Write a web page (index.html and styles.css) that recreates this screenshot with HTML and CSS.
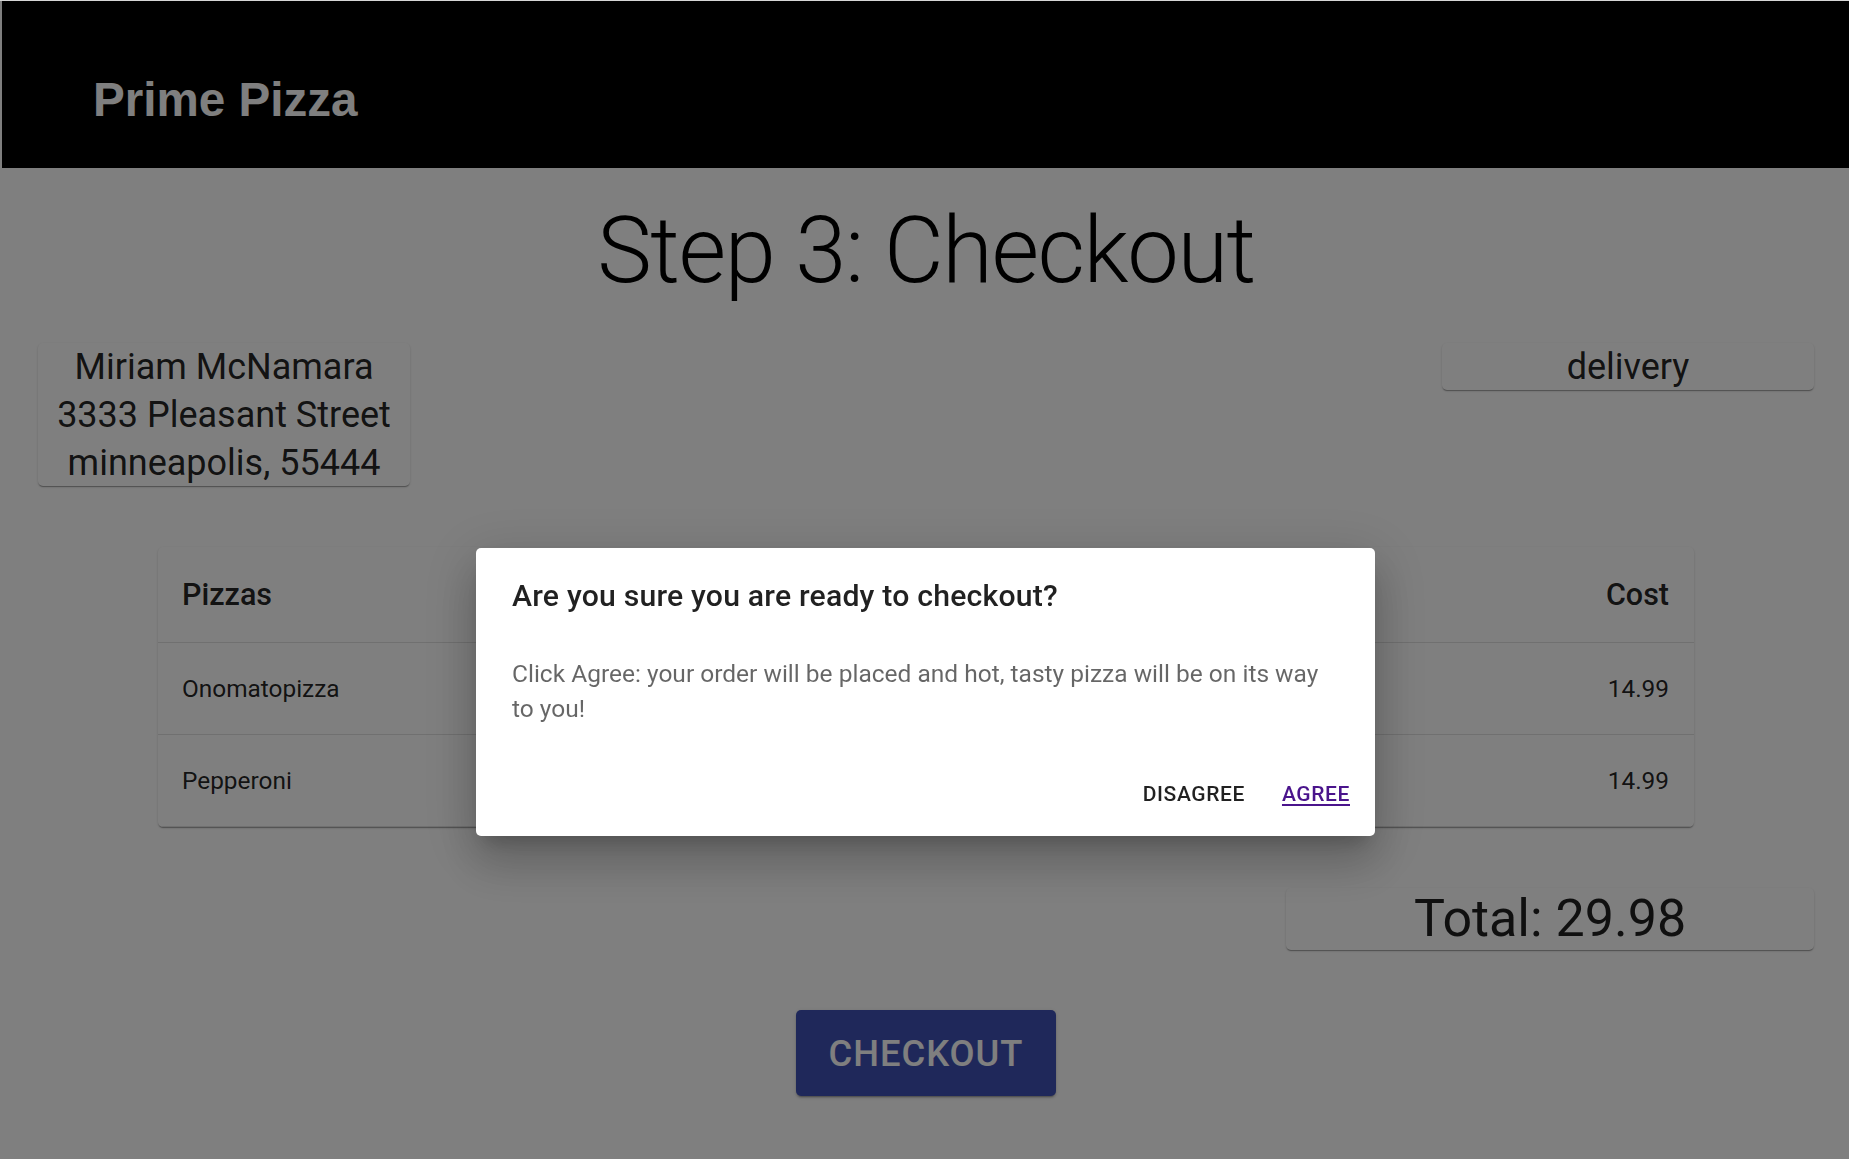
FILE: index.html
```html
<!DOCTYPE html>
<html lang="en">
<head>
<meta charset="utf-8">
<title>Prime Pizza - Checkout</title>
<link rel="stylesheet" href="styles.css">
</head>
<body>
<div class="topline"></div>
<header class="appbar">
  <h1 class="brand">Prime Pizza</h1>
</header>
<main class="page">
  <h2 class="step-title">Step 3: Checkout</h2>
  <div class="info-row">
    <div class="paper info-card">
      <div class="info-text">Miriam McNamara<br>3333 Pleasant Street<br>minneapolis, 55444</div>
    </div>
    <div class="paper info-card">
      <div class="info-text">delivery</div>
    </div>
  </div>
  <div class="paper table-wrap">
    <table class="order-table">
      <thead>
        <tr><th class="col-name">Pizzas</th><th class="col-cost">Cost</th></tr>
      </thead>
      <tbody>
        <tr><td class="col-name">Onomatopizza</td><td class="col-cost">14.99</td></tr>
        <tr><td class="col-name">Pepperoni</td><td class="col-cost">14.99</td></tr>
      </tbody>
    </table>
  </div>
  <div class="total-row">
    <div class="paper total-card">Total: 29.98</div>
  </div>
  <div class="actions-row">
    <button class="checkout-btn" type="button">Checkout</button>
  </div>
</main>
<div class="backdrop"></div>
<div class="dialog-layer">
  <div class="dialog" role="dialog">
    <h2 class="dialog-title">Are you sure you are ready to checkout?</h2>
    <p class="dialog-text">Click Agree: your order will be placed and hot, tasty pizza will be on its way to you!</p>
    <div class="dialog-actions">
      <button class="text-btn" type="button">Disagree</button>
      <button class="text-btn text-btn-primary" type="button">Agree</button>
    </div>
  </div>
</div>
</body>
</html>
```

FILE: styles.css
```css
* { box-sizing: border-box; }

html, body {
  margin: 0;
  padding: 0;
}

body {
  background: #ffffff;
  font-family: Roboto, "Noto Sans", "Liberation Sans", sans-serif;
  color: rgba(0, 0, 0, 0.87);
  height: 1159px;
  overflow: hidden;
}

.topline {
  height: 1px;
  background: #d6d6d6;
}

.appbar {
  height: 167px;
  margin-left: 2px;
  background: #000000;
  padding: 71px 0 0 91px;
}

.brand {
  margin: 0;
  font-family: "Liberation Sans", Arial, sans-serif;
  font-weight: 700;
  font-size: 47.6px;
  line-height: 55px;
  color: #ffffff;
}

.page {
  padding: 0 35px 0 38px;
}

.step-title {
  margin: 27px 0 0;
  height: 112px;
  text-align: center;
  font-weight: 300;
  font-size: 92px;
  line-height: 112px;
  letter-spacing: -1.4px;
  color: #000000;
}

.info-row {
  margin-top: 36px;
  display: flex;
  justify-content: space-between;
  align-items: flex-start;
}

.paper {
  background: #ffffff;
  border-radius: 5px;
  box-shadow: 0px 2px 1px -1px rgba(0,0,0,0.2), 0px 1px 1px 0px rgba(0,0,0,0.14), 0px 1px 3px 0px rgba(0,0,0,0.12);
}

.info-card {
  width: 372px;
  text-align: center;
  padding-bottom: 0;
  overflow: hidden;
}

.info-text {
  margin-top: 0;
  margin-bottom: -1px;
  font-size: 36px;
  line-height: 48px;
  color: rgba(0, 0, 0, 0.87);
}

.table-wrap {
  margin: 61px 120px 0;
  overflow: hidden;
}

.order-table {
  width: 100%;
  border-collapse: collapse;
}

.order-table th,
.order-table td {
  border-bottom: 1px solid #e0e0e0;
  padding: 27.5px 25px 27.5px 24px;
  font-size: 24.4px;
  line-height: 36px;
  font-weight: 400;
  color: rgba(0, 0, 0, 0.87);
}

.order-table .col-cost {
  padding-right: 25px;
  padding-left: 24px;
}

.order-table th {
  padding-top: 26px;
  padding-bottom: 26px;
  font-size: 30.5px;
  line-height: 43px;
  font-weight: 500;
}

.col-name { text-align: left; }
.col-cost { text-align: right; }

.total-row {
  margin-top: 61px;
  display: flex;
  justify-content: flex-end;
}

.total-card {
  width: 528px;
  text-align: center;
  font-size: 52px;
  line-height: 62px;
  color: rgba(0, 0, 0, 0.87);
}

.actions-row {
  margin-top: 60px;
  display: flex;
  justify-content: center;
}

.checkout-btn {
  width: 260px;
  height: 86px;
  border: none;
  border-radius: 5px;
  background: #3f51b5;
  color: #ffffff;
  font-family: Roboto, "Liberation Sans", sans-serif;
  font-weight: 500;
  font-size: 36.3px;
  letter-spacing: 1px;
  text-transform: uppercase;
  box-shadow: 0px 3px 1px -2px rgba(0,0,0,0.2), 0px 2px 2px 0px rgba(0,0,0,0.14), 0px 1px 5px 0px rgba(0,0,0,0.12);
  padding: 0;
}

.backdrop {
  position: fixed;
  top: 1px;
  left: 0;
  right: 0;
  bottom: 0;
  background: rgba(0, 0, 0, 0.5);
}

.dialog-layer {
  position: fixed;
  inset: 0;
  display: flex;
  justify-content: center;
  align-items: flex-start;
  padding-top: 548px;
  padding-left: 2px;
}

.dialog {
  width: 899px;
  height: 288px;
  background: #ffffff;
  border-radius: 5px;
  box-shadow: 0px 13px 18px -8px rgba(0,0,0,0.2), 0px 28px 45px 4px rgba(0,0,0,0.14), 0px 11px 54px 10px rgba(0,0,0,0.12);
  display: flex;
  flex-direction: column;
}

.dialog-title {
  margin: 0;
  padding: 28px 36px 0;
  font-size: 30.2px;
  line-height: 40px;
  font-weight: 500;
  letter-spacing: 0.2px;
  color: rgba(0, 0, 0, 0.87);
}

.dialog-text {
  margin: 0;
  padding: 40px 36px 0;
  font-size: 24.5px;
  line-height: 35px;
  color: rgba(0, 0, 0, 0.6);
}

.dialog-actions {
  margin-top: auto;
  display: flex;
  justify-content: flex-end;
  gap: 13px;
  padding: 0 13px 25px 0;
}

.text-btn {
  background: transparent;
  border: none;
  padding: 3px 12px;
  font-family: Roboto, "Liberation Sans", sans-serif;
  font-weight: 500;
  font-size: 21px;
  line-height: 28px;
  letter-spacing: 0.6px;
  text-transform: uppercase;
  color: rgba(0, 0, 0, 0.87);
}

.text-btn-primary {
  color: #4a148c;
  text-decoration: underline;
  text-decoration-thickness: 2px;
  text-underline-offset: 3px;
}
```
